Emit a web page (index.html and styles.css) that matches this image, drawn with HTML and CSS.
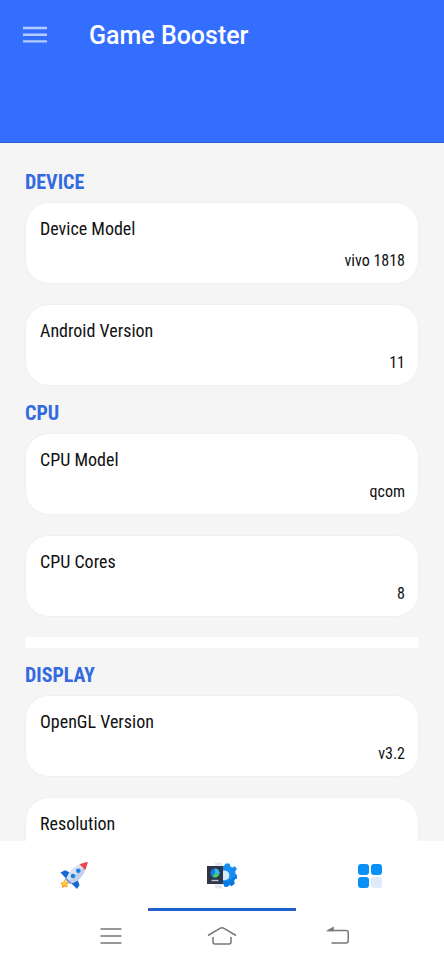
FILE: index.html
```html
<!DOCTYPE html>
<html lang="en">
<head>
<meta charset="utf-8">
<meta name="viewport" content="width=device-width, initial-scale=1">
<title>Game Booster</title>
<link rel="stylesheet" href="styles.css">
</head>
<body>
<header class="appbar">
  <button class="menu" type="button" aria-label="Open menu">
    <svg width="24" height="18" viewBox="0 0 24 18" stroke="#b4ccff" stroke-width="2.400"><path d="M0 2h24M0 8.700h24M0 15.400h24"/></svg>
  </button>
  <h1 class="title">Game Booster</h1>
</header>
<main class="content">
  <section class="group">
    <h2 class="heading">DEVICE</h2>
    <dl class="cards">
      <div class="card"><dt>Device Model</dt><dd>vivo 1818</dd></div>
      <div class="card"><dt>Android Version</dt><dd>11</dd></div>
    </dl>
  </section>
  <section class="group">
    <h2 class="heading">CPU</h2>
    <dl class="cards">
      <div class="card"><dt>CPU Model</dt><dd>qcom</dd></div>
      <div class="card"><dt>CPU Cores</dt><dd>8</dd></div>
    </dl>
    <div class="strip"></div>
  </section>
  <section class="group">
    <h2 class="heading">DISPLAY</h2>
    <dl class="cards">
      <div class="card"><dt>OpenGL Version</dt><dd>v3.2</dd></div>
      <div class="card"><dt>Resolution</dt><dd></dd></div>
    </dl>
  </section>
</main>
<nav class="tabs">
  <button class="tab" type="button" aria-label="Boost">
    <svg width="30" height="30" viewBox="0 0 30 30">
      <path d="M11 11.500 6 9.300 1.500 11.500l5.500 6z" fill="#1769cf"/>
      <path d="M18.500 18.500 20.500 24 18 28l-6-6z" fill="#1769cf"/>
      <path d="M7.500 18C9 10.500 15 4.500 23.500 2.700l3.500 3.800C25 14.500 19 21 11.500 22.500z" fill="#d9e2f5"/>
      <path d="M9.500 20.500 25.500 5l1.500 1.500C25 14.500 19 21 11.500 22.500z" fill="#c3cfec"/>
      <path d="M20.500 3.200 27.500 1c.8-.2 1.300.400 1.100 1.200L26.400 9z" fill="#e8484d"/>
      <path d="m7 16.500 6 6-2.200.5-4.800-4.800z" fill="#7c91c4"/>
      <circle cx="19.300" cy="9.800" r="2.300" fill="#1683e0"/>
      <circle cx="14" cy="15" r="2.300" fill="#1683e0"/>
      <path d="m5.500 18.500 1.600 2.200 2.700.7-1.500 2.300.2 2.800-2.700-.8-3 1.500.5-3.200L1.300 21.700l3-.6z" fill="#ff9d2e"/>
      <circle cx="5.700" cy="22.500" r="2.200" fill="#ffd43b"/>
    </svg>
  </button>
  <button class="tab tab-active" type="button" aria-label="Device info" aria-current="page">
    <svg width="30" height="30" viewBox="0 0 30 30">
      <path d="M8 1.500h7v26H8z" fill="#e3e9f0"/>
      <path d="M16 5h1l1.500-2.500h4l1 3 2 .9 2.400-1.200 2 2.900-1.700 2.200.3 2.200 1.500 1.700v3l-2.200 1-.8 1.700.6 2.900-3 2.200-2.400-1.200-1.500 2h-3L16 22z" fill="#168df2"/>
      <path d="M16 20c5 1 8-.5 10-3.500l4-1v1.700l-2.200 1-.8 1.700.6 2.900-3 2.200-2.400-1.200-1.500 2h-3L16 22z" fill="#0878e2"/>
      <path d="M16 9.500c4.500 0 6.300 1.800 6.300 5s-1.800 4.800-6.300 4.800z" fill="#d5ecff"/>
      <rect x="0" y="5" width="16" height="18" fill="#2f3648"/>
      <circle cx="8" cy="12" r="4.500" fill="#147fd9"/>
      <path d="M8 7.500a4.500 4.500 0 0 1 4.200 6.100L8 12z" fill="#39b9ef"/>
      <path d="M8 12 12.200 13.600a4.500 4.500 0 0 1-6.700 2.200z" fill="#4ccb55"/>
      <path d="M4.500 19.500h7" stroke="#b8c6d9" stroke-width="1.400"/>
    </svg>
  </button>
  <button class="tab" type="button" aria-label="Apps">
    <svg width="26" height="26" viewBox="0 0 26 26" fill="#0a91f8">
      <rect x="1" y="1" width="11" height="11" rx="3"/><rect x="14" y="1" width="11" height="11" rx="3"/>
      <rect x="1" y="14" width="11" height="11" rx="3"/><rect x="14" y="14" width="11" height="11" rx="3" fill="#dfeafb"/>
    </svg>
  </button>
</nav>
<footer class="system">
  <button type="button" aria-label="Recent apps">
    <svg width="40" height="20" viewBox="0 0 40 20" class="line"><path d="M9.500 3h21M9.500 10h21M9.500 17h21"/></svg>
  </button>
  <button type="button" aria-label="Home">
    <svg width="40" height="20" viewBox="0 0 40 20" class="line"><path d="M6 9.500 18 2.300q2-1.200 4 0L34 9.500M11 11v5q0 2 2 2h14q2 0 2-2v-5"/></svg>
  </button>
  <button type="button" aria-label="Back">
    <svg width="40" height="20" viewBox="0 0 40 20" class="line"><path d="M15.500 4.500h17.700q2 0 2 2V15q0 2-2 2H18.500"/><path d="M15.500 4.500 20 1.800v2.700z" fill="#777"/></svg>
  </button>
</footer>
</body>
</html>
```
FILE: styles.css
```css
* { box-sizing: border-box; }

body {
  margin: 0;
  height: 100vh;
  display: flex;
  flex-direction: column;
  background: #f5f5f5;
  color: #111;
  font-family: "Roboto Condensed", Roboto, sans-serif;
}

button {
  display: flex;
  align-items: center;
  justify-content: center;
  padding: 0;
  border: 0;
  background: none;
}

h1, h2, dl, dd { margin: 0; }

.appbar {
  flex: none;
  display: flex;
  align-items: flex-start;
  gap: 42px;
  height: 143px;
  padding: 19px 23px;
  background: #346eff;
  border-bottom: 1px solid #285bd2;
}

.menu { height: 32px; }

.title {
  color: #fff;
  font: 500 25px/34px Roboto, sans-serif;
}

.content {
  flex: 1;
  min-height: 0;
  overflow: hidden;
  padding: 12px 25px 0;
}

.group { padding-top: 15px; }

.heading {
  margin-bottom: 8px;
  color: #346adf;
  font-size: 20px;
  font-weight: 700;
  line-height: 24px;
}

.cards {
  display: flex;
  flex-direction: column;
  gap: 20px;
}

.card {
  display: flex;
  flex-direction: column;
  justify-content: space-between;
  height: 82px;
  padding: 15px 13px 12px 14px;
  border: 1px solid #f0f0f0;
  border-radius: 24px;
  background: #fff;
}

.card dt {
  font-size: 18px;
  line-height: 22px;
}

.card dd {
  font-size: 16px;
  line-height: 20px;
  text-align: right;
}

.strip {
  height: 11px;
  margin-top: 20px;
  border-radius: 4px;
  background: #fff;
}

.tabs {
  flex: none;
  display: grid;
  grid-template-columns: repeat(3, 1fr);
  height: 70px;
  background: #fff;
}

.tab {
  padding-top: 2px;
  border-bottom: 3px solid transparent;
}

.tab-active { border-color: #2260d2; }

.system {
  flex: none;
  display: flex;
  justify-content: center;
  gap: 71px;
  height: 51px;
  padding-bottom: 2px;
  background: #fff;
}

.line {
  fill: none;
  stroke: #777;
  stroke-width: 1.5;
}
```
